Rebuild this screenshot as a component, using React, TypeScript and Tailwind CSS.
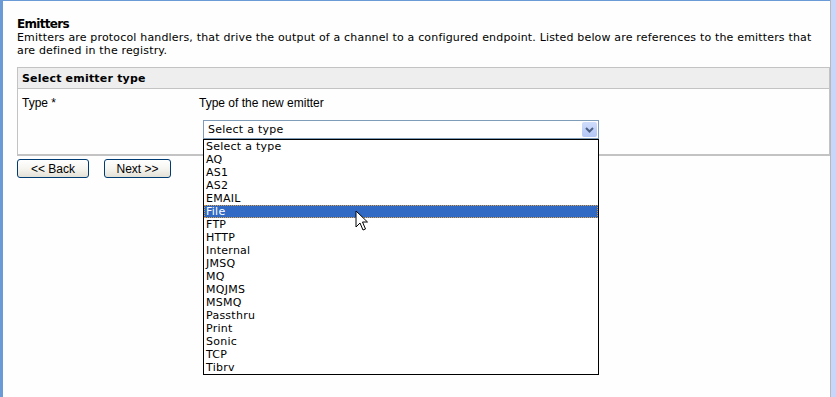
import React from 'react';

const types = [
  'Select a type', 'AQ', 'AS1', 'AS2', 'EMAIL', 'File', 'FTP', 'HTTP', 'Internal', 'JMSQ',
  'MQ', 'MQJMS', 'MSMQ', 'Passthru', 'Print', 'Sonic', 'TCP', 'Tibrv',
];

const tahoma = "font-['DejaVu_Sans',sans-serif]";
const arial = "font-['Liberation_Sans',Arial,sans-serif]";

const XpButton: React.FC<{ label: string; className?: string }> = ({ label, className }) => (
  <button
    className={`h-[19px] rounded-[3px] border border-[#003c74] bg-gradient-to-b from-white via-[#f6f5f0] to-[#e3e1d6] text-[12px] leading-none text-black ${arial} ${className ?? ''}`}
  >
    {label}
  </button>
);

const Cursor: React.FC = () => (
  <svg className="absolute left-[355px] top-[210px]" width="14" height="22" viewBox="0 0 14 22">
    <path d="M1 1 L1 17 L5 13 L8 20 L10.5 19 L7.5 12 L12.5 12 Z" fill="#fff" stroke="#000" strokeWidth="1" strokeLinejoin="miter" />
  </svg>
);

export default function App() {
  return (
    <div className="relative h-[397px] w-[836px] overflow-hidden bg-[#fdfefd]">
      <div className="flex h-full">
        <div className="w-[3px] bg-[#6b9bd6]" />
        <div className="flex flex-1 flex-col border-t border-[#6b9bd6]">
          <div className="pl-[14px] pt-[16px]">
            <h1 className={`text-[12px] font-bold leading-[14px] tracking-[-0.7px] text-black ${tahoma}`}>Emitters</h1>
            <p className={`w-[813px] text-[11px] leading-[13px] tracking-[0.17px] text-black ${tahoma}`}>
              Emitters are protocol handlers, that drive the output of a channel to a configured endpoint. Listed below are references to the emitters that are defined in the registry.
            </p>

            <div className="mt-[10px] w-[813px] border border-b-2 border-[#c3c3c3]">
              <div className={`h-[21px] border-b border-[#c3c3c3] bg-[#eeeeee] pl-[4px] pt-[4px] text-[11px] font-bold leading-[13px] tracking-[0.2px] text-black ${tahoma}`}>
                Select emitter type
              </div>
              <div className="flex h-[65px]">
                <div className={`w-[181px] pl-[4px] pt-[7px] text-[12px] leading-[14px] text-black ${arial}`}>Type *</div>
                <div className="flex flex-col pt-[7px]">
                  <div className={`text-[12px] leading-[14px] text-black ${arial}`}>Type of the new emitter</div>
                  <div className="ml-[4px] mt-[10px] flex h-[19px] w-[396px] items-center justify-between border border-[#7f9db9] bg-white">
                    <span className={`pl-[4px] text-[11px] leading-none tracking-[0.25px] text-black ${tahoma}`}>Select a type</span>
                    <span className="mr-[1px] flex h-[15px] w-[15px] items-center justify-center rounded-[2px] bg-gradient-to-b from-[#cfdcfb] to-[#b3c7f6]">
                      <svg width="9" height="6" viewBox="0 0 9 6">
                        <path d="M1 1 L4.5 4.5 L8 1" fill="none" stroke="#4d6185" strokeWidth="2" />
                      </svg>
                    </span>
                  </div>
                </div>
              </div>
            </div>

            <div className="mt-[3px] flex gap-[15px]">
              <XpButton label="<< Back" className="w-[72px]" />
              <XpButton label="Next >>" className="w-[67px]" />
            </div>
          </div>
        </div>
        <div className="w-[6px] border-l border-[#b8b8b8] bg-[#c7d6fb]" />
      </div>

      <ul className={`absolute left-[203px] top-[139px] w-[396px] border border-black bg-white ${tahoma}`}>
        {types.map((t) => (
          <li
            key={t}
            className={`h-[13px] text-[11px] tracking-[0.25px] ${
              t === 'File'
                ? 'border border-dotted border-[#e0a040] bg-[#316ac5] pl-[1px] leading-[11px] text-white'
                : 'pl-[2px] leading-[13px] text-black'
            }`}
          >
            {t}
          </li>
        ))}
      </ul>

      <Cursor />
    </div>
  );
}
